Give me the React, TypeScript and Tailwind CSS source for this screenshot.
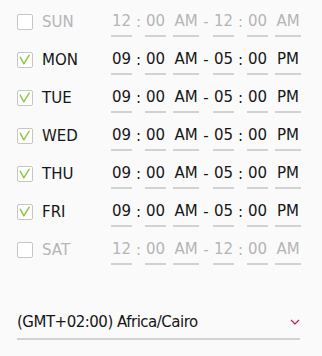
import React from "react";

type Day = { name: string; on: boolean };
const days: Day[] = [
  { name: "SUN", on: false },
  { name: "MON", on: true },
  { name: "TUE", on: true },
  { name: "WED", on: true },
  { name: "THU", on: true },
  { name: "FRI", on: true },
  { name: "SAT", on: false },
];

function Field({ w, children }: { w: string; children: React.ReactNode }) {
  return (
    <div className={`${w} h-[30px] border-b-2 border-[#d2d2d2] flex items-center justify-center`}>
      {children}
    </div>
  );
}

function Row({ d }: { d: Day }) {
  const color = d.on ? "text-[#161616]" : "text-[#b5b5b5]";
  const h1 = d.on ? "09" : "12";
  const h2 = d.on ? "05" : "12";
  const p2 = d.on ? "PM" : "AM";
  return (
    <div className={`h-[38px] flex items-center ${color}`}>
      <div className="w-[17px]" />
      <div className="w-[16px] h-[16px] border-[1.5px] border-[#c6c6c6] rounded-[2px] bg-white relative">
        {d.on && (
          <svg className="absolute left-[-1.5px] top-[-1.5px]" width="16" height="16" viewBox="0 0 16 16">
            <path d="M3.2 5.2 L6.8 11.8 L12.2 3.2" fill="none" stroke="#8cc63f" strokeWidth="1.4" strokeLinecap="round" strokeLinejoin="round" />
          </svg>
        )}
      </div>
      <div className="w-[9px]" />
      <div className="w-[69px] leading-[20px]">{d.name}</div>
      <Field w="w-[21px]">{h1}</Field>
      <div className="w-[13px] text-center">:</div>
      <Field w="w-[21px]">00</Field>
      <div className="w-[7px]" />
      <Field w="w-[26px]">AM</Field>
      <div className="w-[14px] text-center">-</div>
      <Field w="w-[21px]">{h2}</Field>
      <div className="w-[13px] text-center">:</div>
      <Field w="w-[21px]">00</Field>
      <div className="w-[7px]" />
      <Field w="w-[26px]">{p2}</Field>
    </div>
  );
}

export default function App() {
  return (
    <div
      className="w-[322px] h-[356px] bg-[#fafafa] pt-[3px] text-[15px] leading-[20px]"
      style={{ fontFamily: '"DejaVu Sans", sans-serif' }}
    >
      {days.map((d) => (
        <Row key={d.name} d={d} />
      ))}
      <div className="mt-[31px] ml-[17px] w-[283px] pt-[12px] pb-[6px] border-b-2 border-[#d2d2d2] flex items-center text-[#161616] tracking-[-0.5px]">
        <span className="flex-1">(GMT+02:00) Africa/Cairo</span>
        <svg width="10" height="6" viewBox="0 0 10 6" className="mr-[0px]">
          <path d="M1 1 L5 5 L9 1" fill="none" stroke="#cc1a44" strokeWidth="1.2" />
        </svg>
      </div>
    </div>
  );
}
